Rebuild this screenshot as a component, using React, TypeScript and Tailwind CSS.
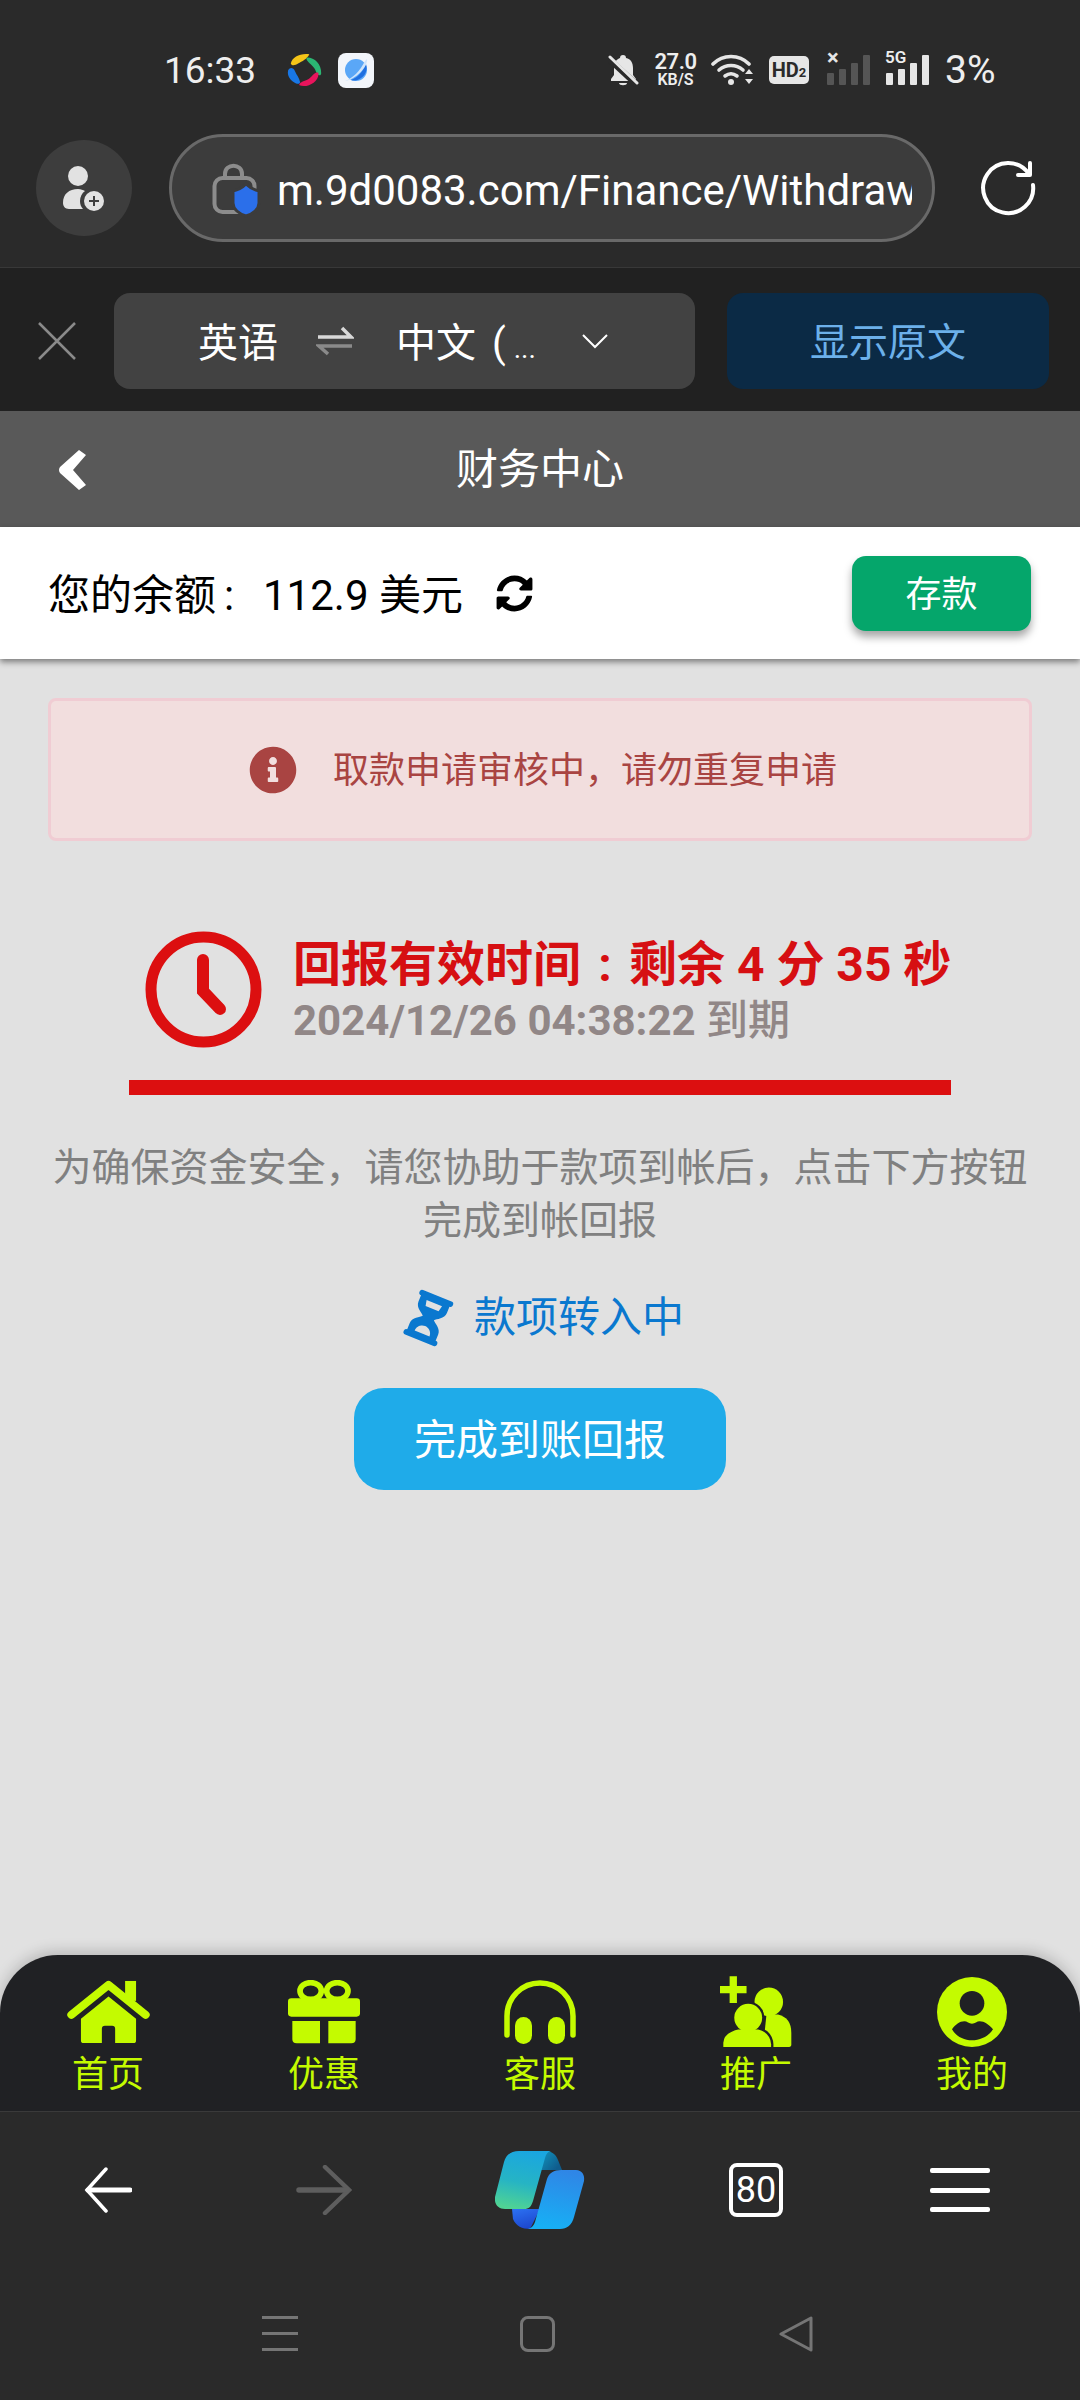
import { FaInfoCircle, FaSyncAlt } from "react-icons/fa";

const lime = "#c4fb00";
const navBg = "#202124";

function BellOff() {
  return (
    <svg width="31" height="34" viewBox="0 0 31 34" fill="#e6e6e6">
      <path d="M15 2c2 0 3 1 3 3 5 1 7 5 7 10v7l3 4v2H3v-2l3-4v-8C6 9 9 6 12 5c0-2 1-3 3-3z" />
      <path d="M11 30h8c0 3-8 3-8 0z" />
      <path d="M1 6 l28 26" stroke="#2a2a2a" strokeWidth="6" />
      <path d="M2 4 l27 26" stroke="#e6e6e6" strokeWidth="3" strokeLinecap="round" />
    </svg>
  );
}

function Wifi() {
  return (
    <svg width="44" height="34" viewBox="0 0 44 34" fill="none" stroke="#e6e6e6" strokeWidth="3.6" strokeLinecap="round">
      <path d="M2 11C12 1 28 1 38 11" />
      <path d="M8 17c7-6 17-6 24 0" />
      <path d="M14 23c4-3 8-3 12 0" />
      <circle cx="20" cy="29" r="3" fill="#e6e6e6" stroke="none" />
      <path d="M34 21l4-5 4 5z M34 26l4 5 4-5z" fill="#e6e6e6" stroke="none" />
    </svg>
  );
}

function Signal({ on }: { on: boolean }) {
  const fill = on ? "#e6e6e6" : "#555555";
  return (
    <svg width="44" height="30" viewBox="0 0 44 30" fill={fill}>
      <rect x="1" y="18" width="7" height="12" rx="1" />
      <rect x="13" y="14" width="7" height="16" rx="1" />
      <rect x="25" y="8" width="7" height="22" rx="1" />
      <rect x="37" y="0" width="7" height="30" rx="1" />
    </svg>
  );
}

function StatusBar() {
  return (
    <div className="h-[134px] flex items-center pl-[164px] pt-[6px] text-[#eeeeee]">
      <span className="text-[37px] leading-none w-[121px]">16:33</span>
      <svg width="40" height="38" viewBox="45 30 120 115">
        <path d="M62 68C66 48 92 36 118 40 112 54 96 62 84 68 76 74 64 76 62 68z" fill="#f5c518" />
        <path d="M112 50C134 50 155 70 154 98 152 108 142 104 138 92 134 78 120 70 114 62 108 56 108 50 112 50z" fill="#2bb673" />
        <path d="M146 100C144 124 114 142 88 134 86 126 100 122 110 118 124 112 130 98 138 96 144 94 146 96 146 100z" fill="#e8145c" />
        <path d="M54 88C60 78 70 80 74 90 80 104 88 112 90 124 90 130 84 130 78 128 60 120 50 104 54 88z" fill="#1877e6" />
      </svg>
      <div className="ml-[13px] w-[36px] h-[35px] rounded-[8px] bg-[#f2f5fa] flex items-center justify-center">
        <svg width="28" height="28" viewBox="0 0 28 28">
          <circle cx="14" cy="14" r="11" fill="#5aa7f7" />
          <path d="M24 8c2 6-1 12-5 14-4 3-8 3-10 2 6-2 12-8 15-16z" fill="#1f6fe0" />
          <path d="M3 25c8-3 15-10 20-20l2-2c1 8-12 21-22 22z" fill="#cfe4fb" />
        </svg>
      </div>
      <div className="ml-[234px]">
        <BellOff />
      </div>
      <div className="ml-[13px] w-[47px] flex flex-col items-center font-semibold">
        <span className="text-[22px] leading-[20px] tracking-[-0.5px]">27.0</span>
        <span className="text-[16px] leading-[16px]">KB/S</span>
      </div>
      <div className="ml-[12px]">
        <Wifi />
      </div>
      <div className="ml-[14px] w-[40px] h-[28px] rounded-[5px] bg-[#e6e6e6] text-[#2a2a2a] flex items-center justify-center font-bold text-[20px] leading-none">
        HD<span className="text-[13px] mt-[5px]">2</span>
      </div>
      <div className="ml-[17px] relative">
        <span className="absolute left-[1px] -top-[8px] text-[22px] leading-none font-bold text-[#e6e6e6]">×</span>
        <Signal on={false} />
      </div>
      <div className="ml-[15px] relative">
        <span className="absolute left-[0px] -top-[6px] text-[17px] leading-none font-semibold">5G</span>
        <Signal on={true} />
      </div>
      <span className="ml-[16px] text-[39px] leading-none">3%</span>
    </div>
  );
}

function AddressRow() {
  return (
    <div className="h-[134px] flex items-start pl-[36px] border-b border-[#383838]">
      <div className="mt-[6px] w-[96px] h-[96px] rounded-full bg-[#3d3d3d] flex items-center justify-center">
        <svg width="44" height="46" viewBox="0 0 44 46" fill="#e2e2e2">
          <circle cx="16" cy="11" r="10" />
          <path d="M1 38c0-9 6-14 15-14 3 0 5 1 7 2-3 2-5 6-5 10 0 3 1 6 3 8H7c-4 0-6-3-6-6z" />
          <circle cx="32" cy="36" r="10" />
          <path d="M32 31v10M27 36h10" stroke="#3d3d3d" strokeWidth="2" />
        </svg>
      </div>
      <div className="ml-[37px] w-[766px] h-[108px] rounded-[54px] border-[3px] border-[#696969] bg-[#3c3c3c] flex items-center pl-[28px] pr-[20px]">
        <svg className="shrink-0 mt-[6px]" width="64" height="80" viewBox="0 0 64 80" fill="none">
          <path d="M25 26v-3c0-11 17-11 17 0v3" stroke="#8c8c8c" strokeWidth="4" />
          <rect x="14.5" y="27" width="40" height="34" rx="8" stroke="#8c8c8c" strokeWidth="4" />
          <path d="M46 33C50 37 54 39 59 40V52C59 58 53 63 46 65 39 63 33 58 33 52V40C38 39 42 37 46 33z" fill="#2b6fea" stroke="#3c3c3c" strokeWidth="3" />
        </svg>
        <div className="ml-[13px] mt-[5px] overflow-hidden whitespace-nowrap text-white text-[42px] leading-[50px] flex-1">
          m.9d0083.com/Finance/Withdraw
        </div>
      </div>
      <svg className="ml-[25px] mt-[11px]" width="90" height="90" viewBox="0 0 90 90" fill="none" stroke="#ffffff" strokeWidth="4" strokeLinecap="round" strokeLinejoin="round">
        <path d="M68.5 28.5A25 25 0 1 0 73 40" />
        <path d="M70 18v12H58" />
      </svg>
    </div>
  );
}

function TranslateBar() {
  return (
    <div className="h-[143px] bg-[#212121] flex items-center pl-[38px] pt-[3px]">
      <svg width="38" height="38" viewBox="0 0 38 38" stroke="#8a8a8a" strokeWidth="2.5">
        <path d="M1 1l36 36M37 1L1 37" />
      </svg>
      <div className="ml-[38px] w-[581px] h-[96px] rounded-[16px] bg-[#424242] flex items-center pl-[84px] pt-[5px] text-white text-[40px] leading-none">
        <span>英语</span>
        <svg className="ml-[38px] -mt-[5px]" width="38" height="30" viewBox="0 0 38 30">
          <path d="M2 11h33L26 2" stroke="#d8d8d8" strokeWidth="3.5" fill="none" />
          <path d="M36 20H3l9 8" stroke="#8a8a8a" strokeWidth="3.5" fill="none" />
        </svg>
        <span className="ml-[42px] whitespace-nowrap">中文</span>
        <span className="ml-[16px]">(</span>
        <span className="ml-[8px] mt-[10px] text-[28px]">...</span>
        <svg className="ml-[45px] -mt-[5px]" width="28" height="16" viewBox="0 0 28 16" fill="none" stroke="#ffffff" strokeWidth="2">
          <path d="M2 2l12 12L26 2" />
        </svg>
      </div>
      <div className="ml-[32px] w-[322px] h-[96px] rounded-[16px] bg-[#0b2a45] flex items-center justify-center pt-[5px] text-[#6cb0ea] text-[39px] leading-none">
        显示原文
      </div>
    </div>
  );
}

function Header() {
  return (
    <div className="h-[116px] bg-[#595959] flex items-center justify-center pt-[2px] relative">
      <svg className="absolute left-[58px] top-[38px]" width="30" height="42" viewBox="0 0 30 42" fill="#ffffff">
        <path d="M21 1l7 5-13 15 13 15-7 5L2 24q-2-3 0-6z" />
      </svg>
      <span className="text-white text-[42px] leading-none">财务中心</span>
    </div>
  );
}

function Balance() {
  return (
    <div className="relative z-10 h-[132px] bg-white flex items-center pl-[48px] pr-[49px] shadow-[0_3px_6px_rgba(0,0,0,0.45)]">
      <span className="mt-[5px] text-black text-[42px] leading-none whitespace-nowrap">
        您的余额<span className="inline-block w-[42px] pl-[8px]">:</span>
        <span className="ml-[5px]">112.9 美元</span>
      </span>
      <FaSyncAlt className="ml-[33px] mt-[1px] text-black" size={37} />
      <div className="ml-auto w-[179px] h-[75px] rounded-[14px] bg-[#05a66b] text-white text-[36px] pt-[3px] flex items-center justify-center shadow-[0_6px_8px_rgba(0,0,0,0.35)]">
        存款
      </div>
    </div>
  );
}

function Clock() {
  return (
    <svg className="shrink-0" width="117" height="117" viewBox="0 0 117 117" fill="none" stroke="#dc0f10">
      <circle cx="58.5" cy="58.5" r="52.5" strokeWidth="11" />
      <path d="M58 29v31l17 18" strokeWidth="12" strokeLinejoin="miter" strokeLinecap="round" />
    </svg>
  );
}

function Hourglass() {
  return (
    <svg className="shrink-0" width="80" height="80" viewBox="0 0 240 240">
      <g transform="translate(115 120) rotate(22)" fill="#0a78cf">
        <rect x="-54" y="-72" width="108" height="17" rx="8" />
        <rect x="-54" y="55" width="108" height="17" rx="8" />
        <path d="M-46-65V-35C-46-15-24-8-18 0-24 8-46 15-46 35V65H46V35C46 15 24 8 18 0 24-8 46-15 46-35V-65z" />
        <path d="M-25-48H25L21-30H-21z" fill="#e1e1e1" />
        <path d="M-24 50H24C24 34 10 26 0 26-10 26-24 34-24 50z" fill="#e1e1e1" />
      </g>
    </svg>
  );
}

function Main() {
  return (
    <div className="flex-1 flex flex-col items-center">
      <div className="mt-[39px] w-[984px] h-[143px] rounded-[8px] border-[3px] border-[#f0ccd3] bg-[#f2dede] flex items-center justify-center pl-[6px] text-[#a94442] text-[36px] leading-none">
        <FaInfoCircle size={48} />
        <span className="ml-[36px] mt-[3px]">取款申请审核中，请勿重复申请</span>
      </div>
      <div className="mt-[90px] w-[822px] flex items-center pl-[16px]">
        <Clock />
        <div className="ml-[31px] pt-[4px] flex flex-col">
          <span className="text-[#d60f12] text-[48px] leading-[58px] font-bold whitespace-nowrap">
            回报有效时间<span className="inline-block w-[48px] text-center">:</span>剩余 4 分 35 秒
          </span>
          <span className="text-[#918787] text-[42px] leading-[54px] font-bold whitespace-nowrap">
            2024/12/26 04:38:22 <span className="font-medium">到期</span>
          </span>
        </div>
      </div>
      <div className="mt-[32px] w-[822px] h-[15px] bg-[#dc0f10]" />
      <p className="mt-[47px] w-[1000px] text-center text-[#808080] text-[39px] leading-[53px]">
        为确保资金安全，请您协助于款项到帐后，点击下方按钮
        <br />
        完成到帐回报
      </p>
      <div className="mt-[30px] pr-[6px] flex items-center text-[#0a78cf] text-[42px] leading-none">
        <Hourglass />
        <span className="ml-[4px]">款项转入中</span>
      </div>
      <div className="mt-[30px] w-[372px] h-[102px] rounded-[30px] bg-[#1fabe9] text-white text-[42px] pt-[3px] flex items-center justify-center">
        完成到账回报
      </div>
    </div>
  );
}

function HomeIcon() {
  return (
    <svg width="83" height="66" viewBox="50 43 250 197" fill={lime}>
      <path d="M225 48h33v60h-33z" />
      <path d="M63 150 175 60 287 150" fill="none" stroke={lime} strokeWidth="24" strokeLinecap="round" strokeLinejoin="round" />
      <path d="M175 95 258 162V227Q258 235 250 235H195V192Q195 183 186 183H164Q155 183 155 192V235H100Q92 235 92 227V162z" />
    </svg>
  );
}

function GiftIcon() {
  return (
    <svg width="72" height="64" viewBox="714 45 216 192" fill={lime}>
      <ellipse cx="782" cy="78" rx="32" ry="25" fill="none" stroke={lime} strokeWidth="17" />
      <ellipse cx="862" cy="78" rx="32" ry="25" fill="none" stroke={lime} strokeWidth="17" />
      <rect x="714" y="100" width="216" height="55" rx="10" />
      <path d="M727 168h83v67h-70q-13 0-13-13z" />
      <path d="M835 168h82v54q0 13-13 13h-69z" />
    </svg>
  );
}

function HeadsetIcon() {
  return (
    <svg width="72" height="64" viewBox="0 0 72 64" fill={lime}>
      <path d="M3 55V36a33 33 0 0 1 66 0v19" fill="none" stroke={lime} strokeWidth="5.5" strokeLinecap="round" />
      <rect x="11" y="37" width="17" height="27" rx="8.5" />
      <rect x="44" y="37" width="17" height="27" rx="8.5" />
    </svg>
  );
}

function ReferralIcon() {
  return (
    <svg width="73" height="72" viewBox="60 35 220 215" fill={lime}>
      <path d="M89 35h22v29h29v22h-29v29H89V86H60V64h29z" />
      <circle cx="207" cy="112" r="43" />
      <path d="M200 150h35q40 10 40 55v35q0 8-7 8h-78z" />
      <g stroke={navBg} strokeWidth="14">
        <circle cx="145" cy="160" r="42" />
        <path d="M70 248V235Q72 205 115 195H175Q212 205 214 240V248z" />
      </g>
      <circle cx="145" cy="160" r="42" />
      <path d="M70 248V235Q72 205 115 195H175Q212 205 214 240V248z" />
    </svg>
  );
}

function ProfileIcon() {
  return (
    <svg width="70" height="70" viewBox="710 35 210 210">
      <circle cx="815" cy="140" r="105" fill={lime} />
      <circle cx="815" cy="114" r="37" fill={navBg} />
      <path d="M755 192C765 178 778 168 792 168 800 168 806 175 815 175 824 175 830 168 838 168 852 168 866 178 878 192 866 212 840 225 815 225 790 225 766 212 755 192z" fill={navBg} />
    </svg>
  );
}

const tabs = [
  { label: "首页", icon: <HomeIcon /> },
  { label: "优惠", icon: <GiftIcon /> },
  { label: "客服", icon: <HeadsetIcon /> },
  { label: "推广", icon: <ReferralIcon /> },
  { label: "我的", icon: <ProfileIcon /> },
];

function TabBar() {
  return (
    <div className="h-[157px] rounded-t-[58px] bg-[#202124] border-b border-[#3a3a3a] grid grid-cols-5 shadow-[0_-4px_14px_rgba(0,0,0,0.18)]">
      {tabs.map((t) => (
        <div key={t.label} className="flex flex-col items-center pt-[21px]">
          <div className="h-[72px] flex items-center justify-center">{t.icon}</div>
          <span className="text-[36px] leading-none mt-[9px] text-[#c4fb00]">{t.label}</span>
        </div>
      ))}
    </div>
  );
}

function Copilot() {
  return (
    <svg width="90" height="78" viewBox="0 0 90 78">
      <defs>
        <linearGradient id="cpA" x1="0.6" y1="0" x2="0.4" y2="1">
          <stop offset="0" stopColor="#1aa6e0" />
          <stop offset="0.55" stopColor="#26b4c4" />
          <stop offset="1" stopColor="#4fd394" />
        </linearGradient>
        <linearGradient id="cpB" x1="0.6" y1="0" x2="0.4" y2="1">
          <stop offset="0" stopColor="#2f86e6" />
          <stop offset="1" stopColor="#17b0f5" />
        </linearGradient>
        <linearGradient id="cpC" x1="0" y1="0" x2="1" y2="0.6">
          <stop offset="0" stopColor="#12a0c8" />
          <stop offset="1" stopColor="#0f5c8c" />
        </linearGradient>
        <linearGradient id="cpD" x1="0.2" y1="0" x2="0.6" y2="1">
          <stop offset="0" stopColor="#2b6ff0" />
          <stop offset="1" stopColor="#1c45cc" />
        </linearGradient>
      </defs>
      <path d="M50 0c6 0 11 3 13 9l4 10H46L40 8z" fill="url(#cpC)" />
      <path d="M17 58h28l-10 20c-8 0-14-3-17-10z" fill="url(#cpD)" />
      <path d="M24 0h32c-4 1-5 4-6 7L38 50c-2 6-4 8-9 8H10C3 58-1 53 0 46L9 11C11 4 16 0 24 0z" fill="url(#cpA)" />
      <path d="M66 19h15c6 0 9 5 8 11L79 66c-2 8-7 12-14 12H33c4-1 6-4 7-7L52 28c2-6 7-9 14-9z" fill="url(#cpB)" />
    </svg>
  );
}

function BrowserBar() {
  return (
    <div className="h-[156px] grid grid-cols-5 items-center">
      <div className="flex justify-center">
        <svg width="48" height="46" viewBox="0 0 48 46" fill="none" stroke="#ffffff" strokeLinecap="round">
          <path d="M22 2 3 23l19 21" strokeWidth="3.5" />
          <path d="M4 23h42" strokeWidth="5" />
        </svg>
      </div>
      <div className="flex justify-center">
        <svg width="56" height="50" viewBox="0 0 56 50" fill="none" stroke="#5e5e5e" strokeLinecap="round">
          <path d="M29 2l24 23-24 23" strokeWidth="4.5" />
          <path d="M3 25h48" strokeWidth="5.5" />
        </svg>
      </div>
      <div className="flex justify-center">
        <Copilot />
      </div>
      <div className="flex justify-center">
        <div className="w-[54px] h-[54px] rounded-[8px] border-[4px] border-white text-white text-[36px] leading-none flex items-center justify-center">
          80
        </div>
      </div>
      <div className="flex justify-center pr-[24px]">
        <div className="w-[60px] h-[44px] flex flex-col justify-between">
          <div className="h-[5px] rounded-[2px] bg-white" />
          <div className="h-[5px] rounded-[2px] bg-white" />
          <div className="h-[5px] rounded-[2px] bg-white" />
        </div>
      </div>
    </div>
  );
}

function SystemNav() {
  return (
    <div className="h-[132px] flex items-start justify-center pt-[48px] pr-[6px]">
      <div className="w-[36px] h-[35px] flex flex-col justify-between">
        <div className="h-[3px] bg-[#757575]" />
        <div className="h-[3px] bg-[#757575]" />
        <div className="h-[3px] bg-[#757575]" />
      </div>
      <div className="ml-[222px] w-[35px] h-[36px] rounded-[8px] border-[3px] border-[#757575]" />
      <svg className="ml-[224px]" width="34" height="36" viewBox="0 0 34 36" fill="none" stroke="#757575" strokeWidth="3" strokeLinejoin="round">
        <path d="M32 2v32L2 18z" />
      </svg>
    </div>
  );
}

export default function App() {
  return (
    <div className="w-[1080px] h-[2400px] overflow-hidden flex flex-col bg-[#e1e1e1] font-['Roboto','Noto_Sans_CJK_SC',sans-serif]">
      <div className="bg-[#2a2a2a]">
        <StatusBar />
        <AddressRow />
      </div>
      <TranslateBar />
      <Header />
      <Balance />
      <Main />
      <TabBar />
      <div className="bg-[#2a2a2a]">
        <BrowserBar />
        <SystemNav />
      </div>
    </div>
  );
}
